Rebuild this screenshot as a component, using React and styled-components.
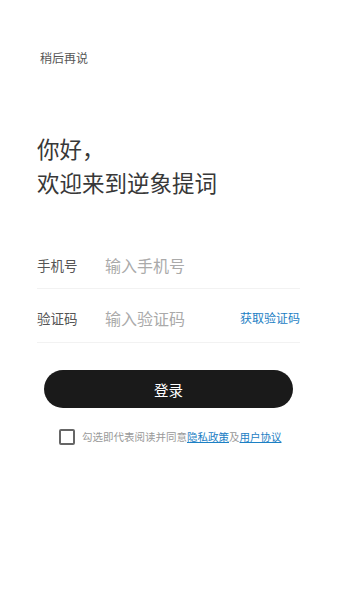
import styled, { createGlobalStyle } from "styled-components";

const Global = createGlobalStyle`
  body {
    margin: 0;
    background: #fff;
    font-family: "Noto Sans CJK SC", "Noto Sans", sans-serif;
  }
`;

const Page = styled.div`
  width: 337px;
  height: 599px;
  box-sizing: border-box;
  padding: 0 37px;
  background: #fff;
`;

const Skip = styled.div`
  padding-top: 49px;
  padding-left: 3px;
  font-size: 12px;
  line-height: 18px;
  color: #555;
`;

const Title = styled.h1`
  margin: 64px 0 0;
  font-size: 22.5px;
  font-weight: 400;
  line-height: 34px;
  color: #383838;
`;

const Form = styled.div`
  margin-top: 47px;
  width: 263px;
`;

// 每一行：标签 + 输入框 (+ 右侧按钮)
const Row = styled.div`
  display: flex;
  align-items: center;
  box-sizing: border-box;
  height: ${(props) => props.$h}px;
  padding-top: ${(props) => props.$pt || 0}px;
  padding-bottom: ${(props) => props.$pb || 0}px;
  border-bottom: 1px solid #f2f2f2;
`;

const Label = styled.span`
  width: 68px;
  font-size: 13.5px;
  color: #555;
`;

const Input = styled.input`
  flex: 1;
  min-width: 0;
  border: none;
  outline: none;
  padding: 0;
  font-family: inherit;
  font-size: 16px;
  color: #333;
  &::placeholder {
    color: #aaa;
  }
`;

const Code = styled.span`
  font-size: 12px;
  color: #1c80c4;
`;

const LoginBtn = styled.button`
  display: block;
  margin: 27px 0 0 7px;
  width: 249px;
  height: 38px;
  border: none;
  border-radius: 19px;
  background: #1a1a1a;
  color: #fff;
  font-family: inherit;
  font-size: 14.5px;
`;

const Agree = styled.div`
  display: flex;
  align-items: center;
  margin: 21px 0 0 22px;
  font-size: 10.5px;
  line-height: 16px;
  color: #999;
`;

const CheckBox = styled.span`
  width: 12px;
  height: 12px;
  border: 2px solid #666;
  border-radius: 2px;
  margin-right: 7px;
`;

const Link = styled.a`
  color: #1c80c4;
  text-decoration: underline;
`;

export default function App() {
  return (
    <Page>
      <Global />
      <Skip>稍后再说</Skip>
      <Title>
        你好，
        <br />
        欢迎来到逆象提词
      </Title>
      <Form>
        <Row $h={43} $pb={4}>
          <Label>手机号</Label>
          <Input placeholder="输入手机号" />
        </Row>
        <Row $h={54} $pt={4}>
          <Label>验证码</Label>
          <Input placeholder="输入验证码" />
          <Code>获取验证码</Code>
        </Row>
      </Form>
      <LoginBtn>登录</LoginBtn>
      <Agree>
        <CheckBox />
        勾选即代表阅读并同意<Link>隐私政策</Link>及<Link>用户协议</Link>
      </Agree>
    </Page>
  );
}
